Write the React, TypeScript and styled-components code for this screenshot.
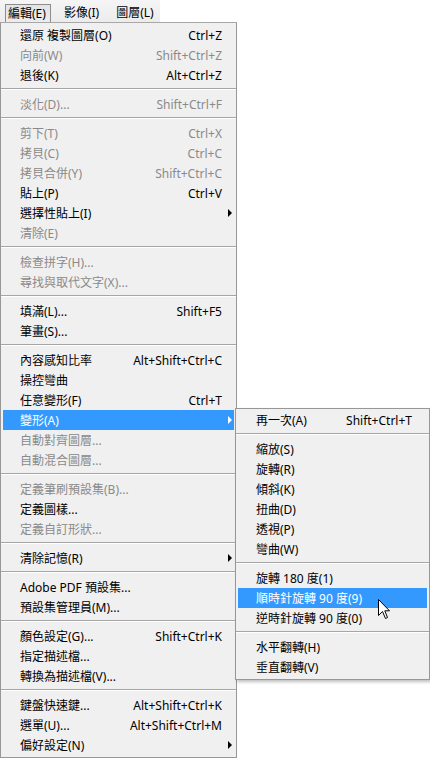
import React from 'react';
import styled, { createGlobalStyle, css } from 'styled-components';

const GlobalStyle = createGlobalStyle`
  html, body {
    margin: 0;
    padding: 0;
    background: #ffffff;
    overflow: hidden;
  }
  body {
    font-family: "Segoe UI", "Noto Sans", "Noto Sans CJK TC", sans-serif;
    font-size: 12px;
    color: #000;
  }
`;

const Screen = styled.div`
  position: relative;
  width: 430px;
  height: 758px;
  overflow: hidden;
  background: #ffffff;
`;

const MenuBar = styled.div`
  display: flex;
  align-items: flex-end;
  width: 160px;
  height: 22px;
  padding-left: 5px;
  box-sizing: border-box;
  background: linear-gradient(#f5f5f5, #ececec);
`;

const BarItem = styled.div<{ $open?: boolean }>`
  height: 18px;
  line-height: 17px;
  padding: 0 4px;
  margin-right: 9px;
  box-sizing: border-box;
  white-space: nowrap;
  ${(p) =>
    p.$open &&
    css`
      border: 1px solid #8d8d8d;
      border-bottom: none;
      background: linear-gradient(#e4e4e4, #ececec);
      padding: 0 4px 0 2px;
      margin-right: 9px;
    `}
`;

const Menu = styled.div`
  width: 237px;
  box-sizing: border-box;
  background: #f0f0f0;
  border: 1px solid #979797;
  border-top-color: #a8a8a8;
  padding: 2px;
`;

const SubMenu = styled.div`
  position: absolute;
  left: 235px;
  top: 408px;
  width: 195px;
  box-sizing: border-box;
  background: #f0f0f0;
  border: 1px solid #979797;
  padding: 1px 2px 2px;
  box-shadow: 2px 2px 3px rgba(0, 0, 0, 0.25);
`;

const Row = styled.div<{ $disabled?: boolean; $active?: boolean; $left: number; $right: number }>`
  display: flex;
  align-items: center;
  height: 20px;
  padding-left: ${(p) => p.$left}px;
  padding-right: ${(p) => p.$right}px;
  white-space: nowrap;
  color: ${(p) => (p.$disabled ? '#8a8a8a' : '#000')};
  ${(p) =>
    p.$active &&
    css`
      background: #3399ff;
      color: #ffffff;
    `}
`;

const Label = styled.span`
  flex: 1;
`;

const Shortcut = styled.span`
  text-align: right;
`;

const ArrowCell = styled.span`
  display: flex;
  align-items: center;
  width: 12px;
  height: 100%;
  padding-left: 6px;
  box-sizing: border-box;
`;

const Arrow = styled.span<{ $light?: boolean }>`
  width: 0;
  height: 0;
  border-top: 4px solid transparent;
  border-bottom: 4px solid transparent;
  border-left: 4px solid ${(p) => (p.$light ? '#ffffff' : '#000000')};
`;

const Separator = styled.div`
  margin: 3px -2px 4px;
  border-top: 1px solid #a6a6a6;
  border-bottom: 1px solid #ffffff;
`;

const Cursor = styled.svg`
  position: absolute;
  left: 378px;
  top: 599px;
`;

type Entry =
  | 'sep'
  | {
      label: string;
      shortcut?: string;
      disabled?: boolean;
      sub?: boolean;
      active?: boolean;
    };

const editMenu: Entry[] = [
  { label: '還原 複製圖層(O)', shortcut: 'Ctrl+Z' },
  { label: '向前(W)', shortcut: 'Shift+Ctrl+Z', disabled: true },
  { label: '退後(K)', shortcut: 'Alt+Ctrl+Z' },
  'sep',
  { label: '淡化(D)...', shortcut: 'Shift+Ctrl+F', disabled: true },
  'sep',
  { label: '剪下(T)', shortcut: 'Ctrl+X', disabled: true },
  { label: '拷貝(C)', shortcut: 'Ctrl+C', disabled: true },
  { label: '拷貝合併(Y)', shortcut: 'Shift+Ctrl+C', disabled: true },
  { label: '貼上(P)', shortcut: 'Ctrl+V' },
  { label: '選擇性貼上(I)', sub: true },
  { label: '清除(E)', disabled: true },
  'sep',
  { label: '檢查拼字(H)...', disabled: true },
  { label: '尋找與取代文字(X)...', disabled: true },
  'sep',
  { label: '填滿(L)...', shortcut: 'Shift+F5' },
  { label: '筆畫(S)...' },
  'sep',
  { label: '內容感知比率', shortcut: 'Alt+Shift+Ctrl+C' },
  { label: '操控彎曲' },
  { label: '任意變形(F)', shortcut: 'Ctrl+T' },
  { label: '變形(A)', sub: true, active: true },
  { label: '自動對齊圖層...', disabled: true },
  { label: '自動混合圖層...', disabled: true },
  'sep',
  { label: '定義筆刷預設集(B)...', disabled: true },
  { label: '定義圖樣...' },
  { label: '定義自訂形狀...', disabled: true },
  'sep',
  { label: '清除記憶(R)', sub: true },
  'sep',
  { label: 'Adobe PDF 預設集...' },
  { label: '預設集管理員(M)...' },
  'sep',
  { label: '顏色設定(G)...', shortcut: 'Shift+Ctrl+K' },
  { label: '指定描述檔...' },
  { label: '轉換為描述檔(V)...' },
  'sep',
  { label: '鍵盤快速鍵...', shortcut: 'Alt+Shift+Ctrl+K' },
  { label: '選單(U)...', shortcut: 'Alt+Shift+Ctrl+M' },
  { label: '偏好設定(N)', sub: true },
];

const transformMenu: Entry[] = [
  { label: '再一次(A)', shortcut: 'Shift+Ctrl+T' },
  'sep',
  { label: '縮放(S)' },
  { label: '旋轉(R)' },
  { label: '傾斜(K)' },
  { label: '扭曲(D)' },
  { label: '透視(P)' },
  { label: '彎曲(W)' },
  'sep',
  { label: '旋轉 180 度(1)' },
  { label: '順時針旋轉 90 度(9)', active: true },
  { label: '逆時針旋轉 90 度(0)' },
  'sep',
  { label: '水平翻轉(H)' },
  { label: '垂直翻轉(V)' },
];

interface MenuListProps {
  entries: Entry[];
  left: number;
  right: number;
  arrows?: boolean;
}

const MenuList: React.FC<MenuListProps> = ({ entries, left, right, arrows }) => (
  <>
    {entries.map((e, i) =>
      e === 'sep' ? (
        <Separator key={i} />
      ) : (
        <Row key={i} $disabled={e.disabled} $active={e.active} $left={left} $right={right}>
          <Label>{e.label}</Label>
          {e.shortcut && <Shortcut>{e.shortcut}</Shortcut>}
          {arrows && <ArrowCell>{e.sub && <Arrow $light={e.active} />}</ArrowCell>}
        </Row>
      )
    )}
  </>
);

export default function App() {
  return (
    <Screen>
      <GlobalStyle />
      <MenuBar>
        <BarItem $open>編輯(E)</BarItem>
        <BarItem>影像(I)</BarItem>
        <BarItem>圖層(L)</BarItem>
      </MenuBar>
      <Menu>
        <MenuList entries={editMenu} left={17} right={0} arrows />
      </Menu>
      <SubMenu>
        <MenuList entries={transformMenu} left={18} right={15} />
      </SubMenu>
      <Cursor width="13" height="21" viewBox="0 0 13 21">
        <path
          d="M0.5 0.5 L0.5 16.5 L4.5 12.5 L7.5 19.5 L9.5 18.5 L6.8 11.8 L11.5 11.8 Z"
          fill="#ffffff"
          stroke="#000000"
          strokeWidth="1"
          strokeLinejoin="miter"
        />
      </Cursor>
    </Screen>
  );
}
